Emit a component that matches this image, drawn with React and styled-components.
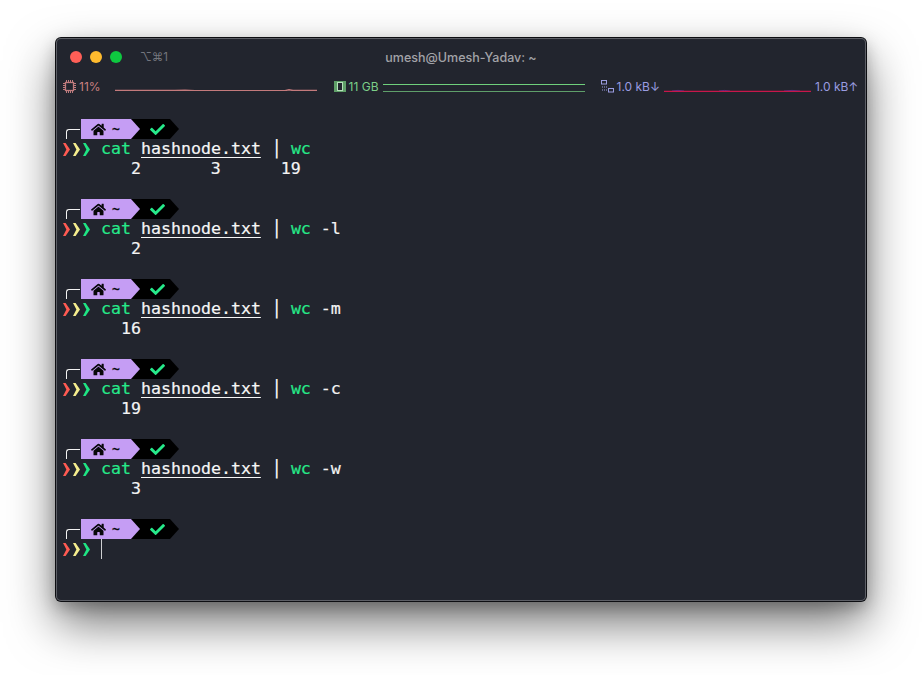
import React from "react";
import styled, { createGlobalStyle } from "styled-components";
import { FaHome, FaCheck } from "react-icons/fa";

const GlobalStyle = createGlobalStyle`
  html, body {
    margin: 0;
    background: #fff;
    overflow: hidden;
  }
`;

const Page = styled.div`
  width: 922px;
  height: 675px;
  padding: 38px 56px 74px;
  box-sizing: border-box;
  background: #fff;
`;

const Window = styled.div`
  height: 563px;
  box-sizing: border-box;
  background: #22252e;
  border-radius: 5px;
  box-shadow: 0 0 0 1px #0d0e12, inset 0 0 0 1px #5d5f66, 0 22px 48px rgba(0, 0, 0, 0.55),
    0 6px 16px rgba(0, 0, 0, 0.25);
  display: flex;
  flex-direction: column;
`;

const TitleBar = styled.div`
  height: 38px;
  position: relative;
  display: flex;
  align-items: center;
  padding-left: 14px;
  flex-shrink: 0;
`;

const Light = styled.span`
  width: 12px;
  height: 12px;
  border-radius: 50%;
  margin-right: 8px;
  background: ${(p) => p.$color};
`;

const TabHint = styled.span`
  margin-left: 10px;
  font: 11.5px "Inter", sans-serif;
  color: #74767d;
`;

const Title = styled.div`
  position: absolute;
  inset: 0;
  display: flex;
  align-items: center;
  justify-content: center;
  font: 500 12.5px "Inter", "Liberation Sans", sans-serif;
  color: #a2a3a8;
`;

const StatusBar = styled.div`
  height: 20px;
  padding: 0 9px 0 7px;
  display: flex;
  align-items: center;
  font: 12px "Inter", "Liberation Sans", sans-serif;
`;

const Stat = styled.span`
  color: ${(p) => p.$color};
  white-space: pre;
  display: flex;
  align-items: center;
  gap: 3px;
  flex-shrink: 0;
  margin-left: ${(p) => p.$left || 0}px;
`;

const Graph = styled.svg`
  display: block;
  flex-shrink: 0;
  margin-left: ${(p) => p.$left}px;
  margin-top: ${(p) => p.$top}px;
`;

const StatGroup = styled.div`
  display: flex;
  align-items: center;
  margin-left: ${(p) => p.$left}px;
`;

const Terminal = styled.div`
  margin-top: 23px;
  padding-left: 5px;
  font: 16.6px/20px "DejaVu Sans Mono", "Liberation Mono", monospace;
  color: #f4f4f4;
  -webkit-text-stroke: 0.2px currentColor;
`;

const Line = styled.div`
  height: 20px;
  white-space: pre;
  display: flex;
  align-items: stretch;
`;

const Block = styled.div`
  margin-bottom: 20px;
`;

const Corner = styled.span`
  width: 14px;
  height: 10px;
  margin: 10px 0 0 5px;
  border-left: 1.5px solid #f2f2f2;
  border-top: 1.5px solid #f2f2f2;
  border-top-left-radius: 3px;
  box-sizing: border-box;
  align-self: flex-start;
`;

const Segments = styled.div`
  display: flex;
  height: 20px;
  margin-left: 1px;
`;

const HomeSegment = styled.div`
  width: 59px;
  height: 20px;
  box-sizing: border-box;
  padding-left: 10px;
  display: flex;
  align-items: center;
  gap: 6px;
  background: #c59df4;
  color: #08080a;
  clip-path: polygon(0 0, 50px 0, 59px 50%, 50px 100%, 0 100%);
  position: relative;
  z-index: 1;
  font-size: 13px;
  font-weight: 700;
`;

const StatusSegment = styled.div`
  width: 48px;
  height: 20px;
  margin-left: -9px;
  padding-left: 19px;
  box-sizing: border-box;
  display: flex;
  align-items: center;
  background: #000;
  color: #26e98a;
  clip-path: polygon(0 0, 39px 0, 48px 50%, 39px 100%, 0 100%);
`;

const Chevrons = styled.span`
  width: 40px;
  display: flex;
  align-items: center;
  gap: 3px;
  padding-left: 1.5px;
  box-sizing: border-box;
`;

const Command = styled.span`
  color: #26e98a;
`;

const FileName = styled.span`
  color: #f6f6f6;
  text-decoration: underline;
  text-decoration-thickness: 1px;
  text-underline-offset: 3px;
`;

const Pipe = styled.span`
  display: inline-block;
  width: 9px;
  margin-right: 1px;
  text-align: center;
  font-size: 19px;
  line-height: 17px;
  vertical-align: top;
  -webkit-text-stroke: 0;
`;

const Cursor = styled.span`
  width: 1px;
  height: 20px;
  background: #cfd0d2;
`;

const Chevron = ({ color }) => (
  <svg width="7" height="13" viewBox="0 0 7 13">
    <path d="M0 0h2.6L7 6.5 2.6 13H0L3.4 6.5z" fill={color} />
  </svg>
);

const Prompt = () => (
  <Line>
    <Corner />
    <Segments>
      <HomeSegment>
        <FaHome size={15} />
        <span>~</span>
      </HomeSegment>
      <StatusSegment>
        <FaCheck size={15} />
      </StatusSegment>
    </Segments>
  </Line>
);

const PromptMark = () => (
  <Chevrons>
    <Chevron color="#ff5a52" />
    <Chevron color="#f5ee8e" />
    <Chevron color="#1fe584" />
  </Chevrons>
);

const CpuIcon = () => (
  <svg width="13" height="13" viewBox="0 0 13 13" fill="none" stroke="#c07c7e">
    <rect x="2.5" y="2.5" width="8" height="8" strokeWidth="1.3" />
    <path d="M3.5 0v2M5.5 0v2M7.5 0v2M9.5 0v2M3.5 11v2M5.5 11v2M7.5 11v2M9.5 11v2M0 3.5h2M0 5.5h2M0 7.5h2M0 9.5h2M11 3.5h2M11 5.5h2M11 7.5h2M11 9.5h2" strokeWidth="1" />
  </svg>
);

const MemIcon = () => (
  <svg width="12" height="11" viewBox="0 0 12 11">
    <rect width="12" height="11" fill="#5f9f68" />
    <rect x="3.5" y="1.5" width="5" height="8" fill="#22252e" stroke="#b6e0bb" />
  </svg>
);

const NetIcon = () => (
  <svg width="13" height="13" viewBox="0 0 13 13" fill="none" stroke="#9a9ce0">
    <rect x=".5" y=".5" width="5" height="3.5" />
    <rect x="7.5" y="8.5" width="5" height="3.5" />
    <path d="M1 7h1M3 7h1M5 7h1M1 10h1M3 10h1M5 10h1" />
  </svg>
);

const commands = [
  { flag: "", output: "       2       3      19" },
  { flag: " -l", output: "       2" },
  { flag: " -m", output: "      16" },
  { flag: " -c", output: "      19" },
  { flag: " -w", output: "       3" },
];

export default function App() {
  return (
    <Page>
      <GlobalStyle />
      <Window>
        <TitleBar>
          <Title>umesh@Umesh-Yadav: ~</Title>
          <Light $color="#fe5f57" />
          <Light $color="#febb2e" />
          <Light $color="#0ec840" />
          <TabHint>⌥⌘1</TabHint>
        </TitleBar>
        <StatusBar>
          <Stat $color="#c98080">
            <CpuIcon />
            11%
          </Stat>
          <Graph $left={14} $top={4} width="202" height="6" viewBox="0 0 202 6">
            <path d="M0 5.5H60L70 5.2 80 5.6H170L174 4.8 178 5.5H202" fill="none" stroke="#c47a7c" strokeWidth="1.4" />
          </Graph>
          <StatGroup $left={17}>
            <Stat $color="#7ccf88">
              <MemIcon />
              11 GB
            </Stat>
            <Graph $left={4} $top={3} width="202" height="9" viewBox="0 0 202 9">
              <path d="M0 1.5H202" stroke="#6fd07c" strokeWidth="1.2" />
              <path d="M0 8.5H202" stroke="#5f9f6a" strokeWidth="1.2" />
            </Graph>
          </StatGroup>
          <StatGroup $left={16}>
            <Stat $color="#9a9ce0">
              <NetIcon />
              1.0 kB↓
            </Stat>
            <Graph $left={4} $top={6} width="147" height="6" viewBox="0 0 147 6">
              <path d="M8 5Q14 3.8 20 5M55 5Q60 3.8 66 5M120 5Q128 3.8 136 5" stroke="#4a2f8a" strokeWidth="1" fill="none" />
              <path d="M0 5.5H147" stroke="#c8174a" strokeWidth="1.3" />
            </Graph>
            <Stat $color="#9a9ce0" $left={4}>
              1.0 kB↑
            </Stat>
          </StatGroup>
        </StatusBar>
        <Terminal>
          {commands.map((c) => (
            <Block key={c.flag}>
              <Prompt />
              <Line>
                <PromptMark />
                <span>
                  <Command>cat</Command> <FileName>hashnode.txt</FileName> <Pipe>|</Pipe> <Command>wc</Command>
                  {c.flag}
                </span>
              </Line>
              <Line>{c.output}</Line>
            </Block>
          ))}
          <Prompt />
          <Line>
            <PromptMark />
            <Cursor />
          </Line>
        </Terminal>
      </Window>
    </Page>
  );
}
